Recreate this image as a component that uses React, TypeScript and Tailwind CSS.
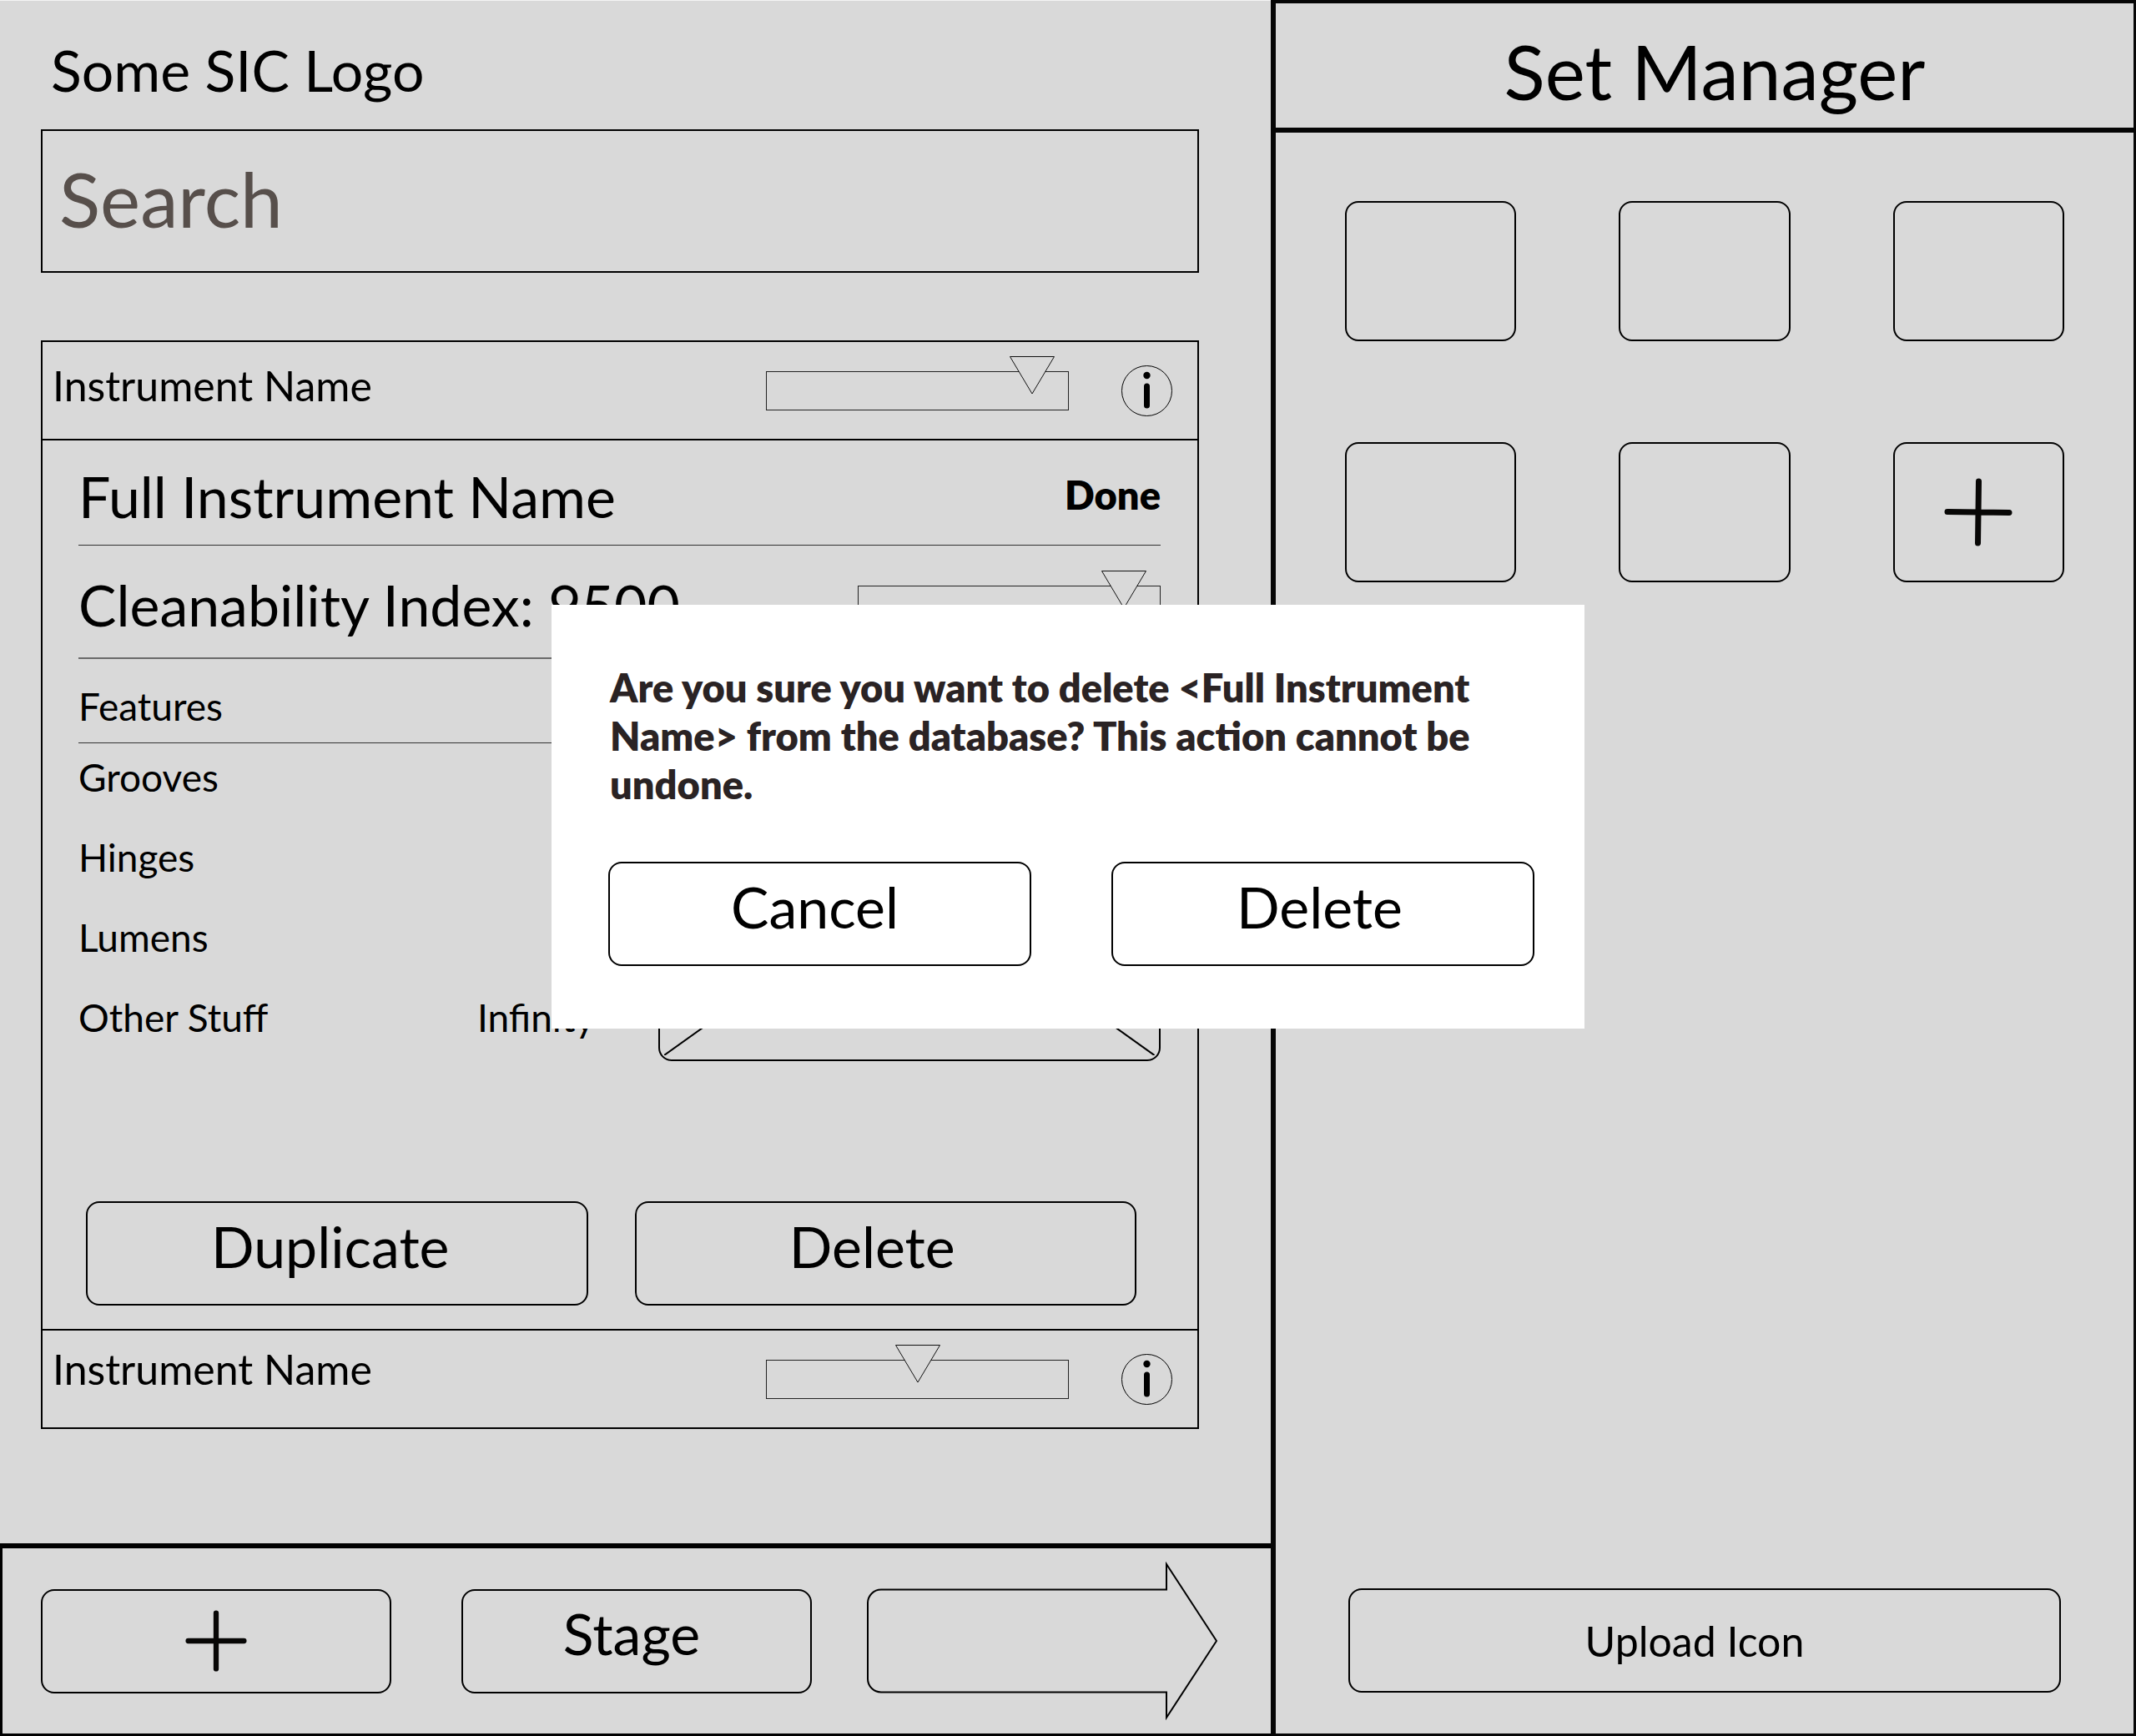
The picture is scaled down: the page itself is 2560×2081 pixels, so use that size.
import { useState } from "react";

const PAGE = "#d9d9d9";

function PlusIcon({ className, tilted = false }: { className: string; tilted?: boolean }) {
  return (
    <svg viewBox="0 0 82 82" className={className} fill="none" stroke="#080706" strokeWidth="7" strokeLinecap="round" aria-hidden="true">
      {tilted ? <path d="M4 40.5 78 41.5M41.5 4 40.5 78" /> : <path d="M4 41H78M41 4V78" />}
    </svg>
  );
}

function InfoButton() {
  return (
    <button type="button" aria-label="Instrument details" className="shrink-0">
      <svg viewBox="0 0 61 61" className="size-[61px]" aria-hidden="true">
        <circle cx="30.5" cy="30.5" r="30" fill="none" stroke="#000" strokeWidth="1" />
        <circle cx="30.5" cy="12" r="4.2" />
        <rect x="27" y="21.5" width="7" height="30" rx="3.5" />
      </svg>
    </button>
  );
}

function IndexSlider({ label, initial }: { label: string; initial: number }) {
  const [value, setValue] = useState(initial);
  return (
    <div className="relative h-[47px] w-[363px] shrink-0 border border-[#222]">
      <svg
        viewBox="0 0 56 48"
        className="pointer-events-none absolute -top-5 h-12 w-14 -translate-x-1/2"
        style={{ left: `${value}%` }}
        fill={PAGE}
        stroke="#111"
        strokeWidth="1"
        aria-hidden="true"
      >
        <path d="M1.5 1.5H54.5L28 46Z" />
      </svg>
      <input
        type="range"
        min={0}
        max={100}
        value={value}
        aria-label={label}
        onChange={(e) => setValue(Number(e.target.value))}
        className="absolute inset-0 size-full cursor-pointer opacity-0"
      />
    </div>
  );
}

function InstrumentRow({ className, value }: { className: string; value: number }) {
  return (
    <div className="flex h-[116px] items-center pr-[30px] pl-3">
      <h2 className={className}>Instrument Name</h2>
      <div className="ml-auto flex items-center gap-[63px]">
        <IndexSlider label="Cleanability" initial={value} />
        <InfoButton />
      </div>
    </div>
  );
}

function ImagePlaceholder() {
  return (
    <div className="mt-12 h-[434px] overflow-hidden rounded-2xl border-2 border-black p-[5px]">
      <svg viewBox="0 0 100 100" preserveAspectRatio="none" className="size-full" stroke="#000" strokeWidth="2" aria-hidden="true">
        <path d="M0 0 100 100M100 0 0 100" vectorEffect="non-scaling-stroke" />
      </svg>
    </div>
  );
}

const features = [
  { name: "Grooves", value: "" },
  { name: "Hinges", value: "" },
  { name: "Lumens", value: "" },
  { name: "Other Stuff", value: "Infinity" },
];

const bigButton = "h-[125px] rounded-2xl border-2 border-black pb-[18px] text-[68px] leading-[80px]";

export default function App() {
  return (
    <div className="relative grid min-h-screen grid-cols-[1523fr_1037fr] bg-[#d9d9d9] font-['Lato',sans-serif] text-black">
      <div className="flex min-w-0 flex-col border-t border-[#f4f4f4]">
        <main className="flex-1 pt-[43px] pr-[86px] pb-12 pl-[49px]">
          <h1 className="pl-3 text-[68px] leading-[80px]">Some SIC Logo</h1>
          <input
            type="search"
            aria-label="Search"
            placeholder="Search"
            className="mt-[31px] block h-[172px] w-full border-2 border-black bg-transparent pb-2 pl-5 text-[91px] placeholder:text-[#574f4b] placeholder:opacity-100"
          />

          <section className="mt-[81px] border-2 border-black" aria-label="Instruments">
            <InstrumentRow className="pb-3 text-[50px] leading-[60px]" value={88} />

            <article className="border-y-2 border-black pr-[44px] pb-7 pl-[43px]">
              <div className="flex items-center justify-between border-b border-[#333] pt-[27px] pb-[18px]">
                <h3 className="text-[68px] leading-[80px]">Full Instrument Name</h3>
                <button type="button" className="pb-1 text-[47px] leading-[54px] font-extrabold">
                  Done
                </button>
              </div>
              <div className="flex items-center justify-between border-b-2 border-[#6a6a6a] pt-[31px] pb-[23px]">
                <p className="text-[68px] leading-[80px] whitespace-nowrap">Cleanability Index: 9500</p>
                <IndexSlider label="Cleanability index" initial={88} />
              </div>
              <div className="grid grid-cols-[656fr_602fr] items-start gap-10">
                <table className="w-full text-left text-[46px] leading-[54px]">
                  <thead>
                    <tr className="border-b border-[#333]">
                      <th colSpan={2} className="pt-[30px] pb-4 font-normal">
                        Features
                      </th>
                    </tr>
                  </thead>
                  <tbody>
                    {features.map((feature) => (
                      <tr key={feature.name}>
                        <td className="w-[478px] pt-[14px] pb-7">{feature.name}</td>
                        <td className="pt-[14px] pb-7">{feature.value}</td>
                      </tr>
                    ))}
                  </tbody>
                </table>
                <ImagePlaceholder />
              </div>
              <div className="mt-[165px] grid grid-cols-2 gap-14 pr-[29px] pl-[9px]">
                <button type="button" className={`${bigButton} pr-4`}>
                  Duplicate
                </button>
                <button type="button" className={`${bigButton} pr-8`}>
                  Delete
                </button>
              </div>
            </article>

            <InstrumentRow className="pb-6 text-[50px] leading-[60px]" value={50} />
          </section>
        </main>

        <footer className="grid grid-cols-[420fr_84fr_420fr_66fr_420fr] items-center border-t-[6px] border-b-[3px] border-l-[3px] border-black py-4 pr-[64px] pl-[46px]">
          <button type="button" aria-label="Add" className="flex h-[125px] items-center justify-center rounded-2xl border-2 border-black">
            <PlusIcon className="size-[74px]" />
          </button>
          <button type="button" className={`${bigButton} col-start-3 pr-3`}>
            Stage
          </button>
          <button type="button" aria-label="Next" className="col-start-5">
            <svg viewBox="0 0 420 190" className="w-full" fill="none" stroke="#000" strokeWidth="2" aria-hidden="true">
              <path d="M359 33.5V3L419 95 359 187V156.500H17A16 16 0 0 1 1 140.500V49.500A16 16 0 0 1 17 33.500Z" />
            </svg>
          </button>
        </footer>
      </div>

      <aside className="flex min-w-0 flex-col border-t-4 border-r-[3px] border-b-[3px] border-l-[6px] border-[#060606]">
        <h2 className="border-b-[6px] border-[#060606] pt-[27px] pb-[14px] pl-6 text-center text-[91px] leading-[108px]">Set Manager</h2>
        <div className="grid grid-cols-3 gap-x-[123px] gap-y-[121px] px-[83px] pt-[82px]">
          {[1, 2, 3, 4, 5].map((slot) => (
            <button key={slot} type="button" aria-label={`Set ${slot}`} className="h-[168px] rounded-2xl border-2 border-black" />
          ))}
          <button type="button" aria-label="Add set" className="flex h-[168px] items-center justify-center rounded-2xl border-2 border-black">
            <PlusIcon className="size-[82px]" tilted />
          </button>
        </div>
        <button type="button" className="mx-[87px] mt-auto mb-[49px] h-[125px] rounded-2xl border-2 border-black pr-6 text-[50px] leading-[60px]">
          Upload Icon
        </button>
      </aside>

      <div className="absolute inset-x-0 top-[725px] flex justify-center">
        <div role="dialog" aria-modal="true" aria-labelledby="confirm-text" className="w-[1238px] bg-white pt-[70px] pr-[60px] pb-[75px] pl-[68px]">
          <p id="confirm-text" className="pl-0.5 text-[47px] leading-[58px] font-extrabold text-[#2a2324]">
            Are you sure you want to delete &lt;Full Instrument Name&gt; from the database? This action cannot be undone.
          </p>
          <div className="mt-16 grid grid-cols-2 gap-24">
            <button type="button" className={`${bigButton} pr-3`}>
              Cancel
            </button>
            <button type="button" className={`${bigButton} pr-2`}>
              Delete
            </button>
          </div>
        </div>
      </div>
    </div>
  );
}
